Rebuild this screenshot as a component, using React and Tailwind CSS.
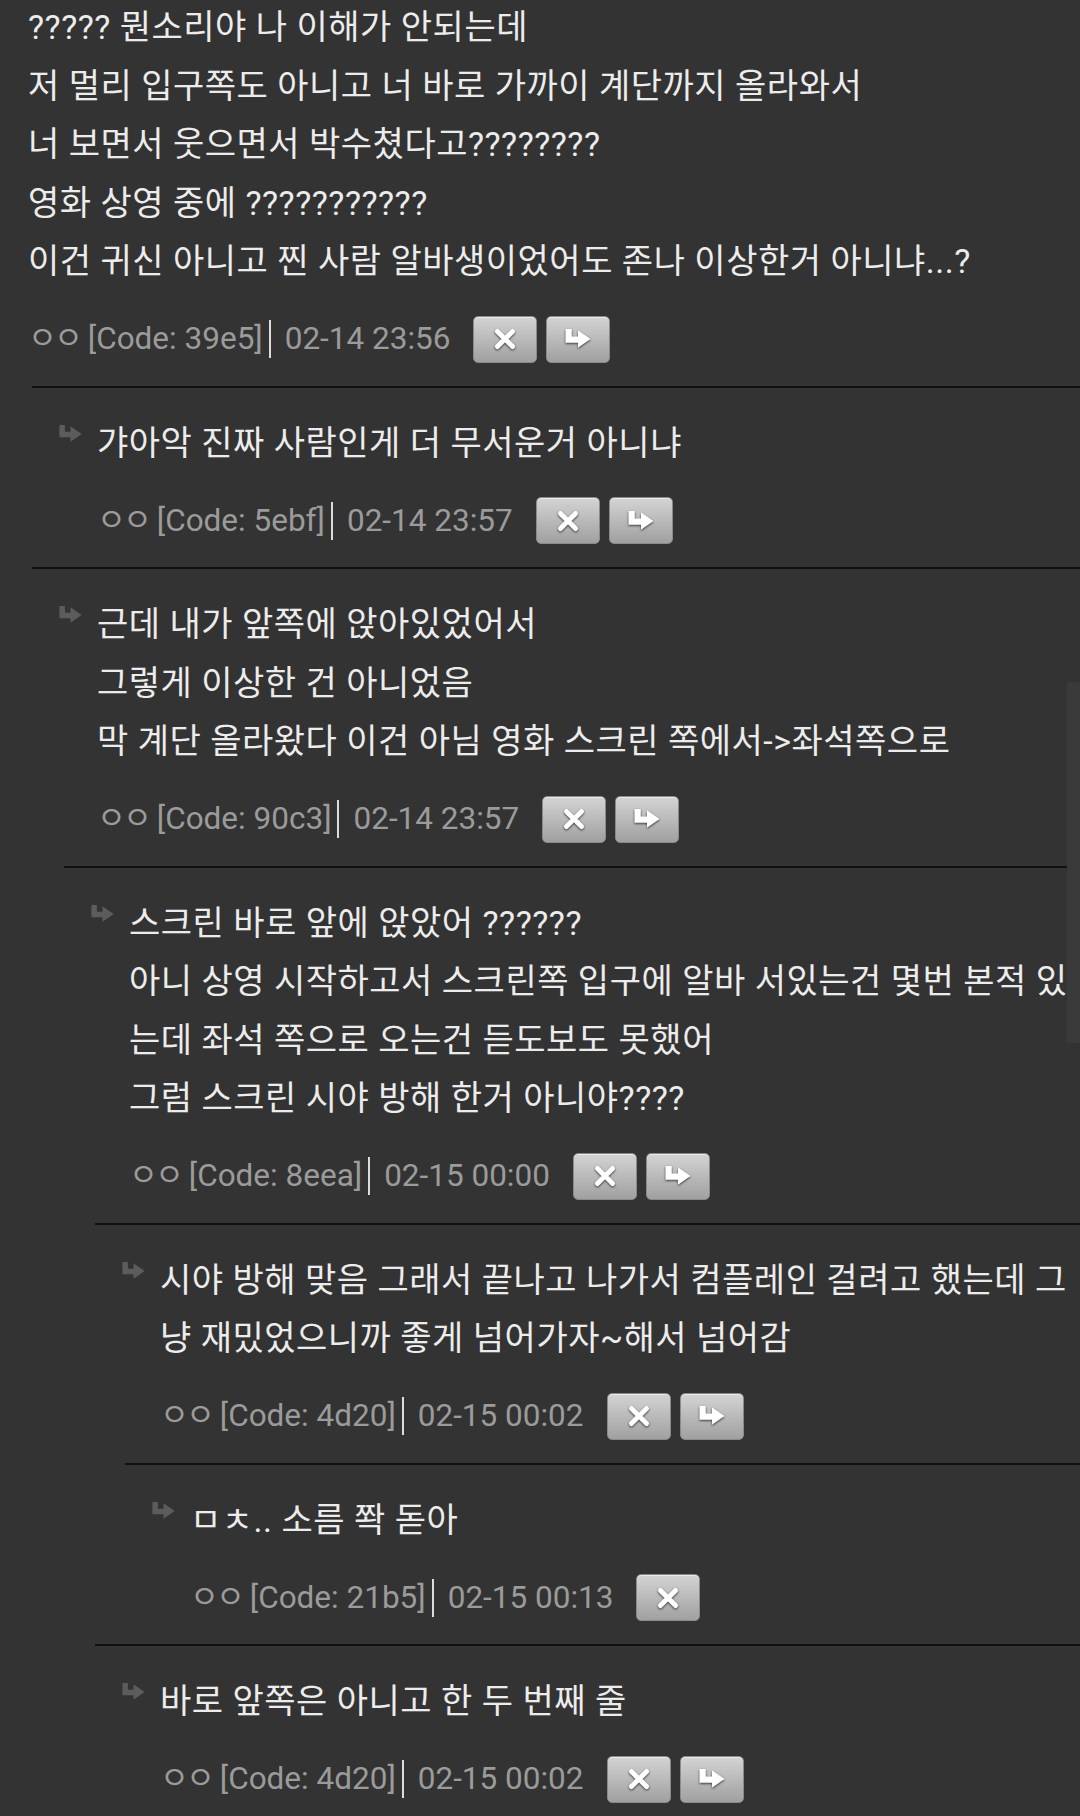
const comments = [
  {
    level: 0,
    lines: [
      "????? 뭔소리야 나 이해가 안되는데",
      "저 멀리 입구쪽도 아니고 너 바로 가까이 계단까지 올라와서",
      "너 보면서 웃으면서 박수쳤다고????????",
      "영화 상영 중에 ???????????",
      "이건 귀신 아니고 찐 사람 알바생이었어도 존나 이상한거 아니냐...?",
    ],
    code: "39e5",
    time: "02-14 23:56",
    reply: true,
  },
  {
    level: 1,
    lines: ["갸아악 진짜 사람인게 더 무서운거 아니냐"],
    code: "5ebf",
    time: "02-14 23:57",
    reply: true,
  },
  {
    level: 1,
    lines: [
      "근데 내가 앞쪽에 앉아있었어서",
      "그렇게 이상한 건 아니었음",
      "막 계단 올라왔다 이건 아님 영화 스크린 쪽에서->좌석쪽으로",
    ],
    code: "90c3",
    time: "02-14 23:57",
    reply: true,
  },
  {
    level: 2,
    lines: [
      "스크린 바로 앞에 앉았어 ??????",
      "아니 상영 시작하고서 스크린쪽 입구에 알바 서있는건 몇번 본적 있",
      "는데 좌석 쪽으로 오는건 듣도보도 못했어",
      "그럼 스크린 시야 방해 한거 아니야????",
    ],
    code: "8eea",
    time: "02-15 00:00",
    reply: true,
  },
  {
    level: 3,
    lines: [
      "시야 방해 맞음 그래서 끝나고 나가서 컴플레인 걸려고 했는데 그",
      "냥 재밌었으니까 좋게 넘어가자~해서 넘어감",
    ],
    code: "4d20",
    time: "02-15 00:02",
    reply: true,
  },
  {
    level: 4,
    lines: ["ㅁㅊ.. 소름 쫙 돋아"],
    code: "21b5",
    time: "02-15 00:13",
    reply: false,
  },
  {
    level: 3,
    lines: ["바로 앞쪽은 아니고 한 두 번째 줄"],
    code: "4d20",
    time: "02-15 00:02",
    reply: true,
  },
];

// left edge of the divider for each reply depth
const indent = {
  1: "ml-[32px]",
  2: "ml-[64px]",
  3: "ml-[95px]",
  4: "ml-[125px]",
};

function ReplyArrow({ className, color }) {
  return (
    <svg viewBox="0 0 24 18" className={className}>
      <path d="M2 1h5v6h5V2l10 7-10 7v-4H2z" fill={color} />
    </svg>
  );
}

function Button({ children }) {
  return (
    <button className="w-[64px] h-[47px] rounded-[5px] bg-gradient-to-b from-[#d4d4d4] to-[#a0a0a0] border border-[#8a8a8a] shadow-[inset_0_1px_0_rgba(255,255,255,0.5)] flex items-center justify-center">
      {children}
    </button>
  );
}

function Meta({ code, time, reply }) {
  return (
    <div className="flex items-center h-[47px] mt-[25px]">
      <span className="text-[31.5px] text-[#9b9b9b] whitespace-nowrap">
        <span className="tracking-[-3px]">ㅇㅇ</span> [Code: {code}]
      </span>
      <span className="ml-[6px] mr-[14px] w-[2px] h-[38px] bg-[#dcdcdc]"></span>
      <span className="text-[31.5px] text-[#9b9b9b] whitespace-nowrap">{time}</span>
      <div className="flex gap-[9px] ml-[23px]">
        <Button>
          <svg viewBox="0 0 24 24" className="w-[26px] h-[26px] drop-shadow-[0_1px_1px_rgba(0,0,0,0.7)]">
            <path d="M5 5l14 14M19 5L5 19" stroke="#ffffff" strokeWidth="4.5" strokeLinecap="round" />
          </svg>
        </Button>
        {reply && (
          <Button>
            <ReplyArrow className="w-[30px] h-[24px] drop-shadow-[0_1px_1px_rgba(0,0,0,0.7)]" color="#ffffff" />
          </Button>
        )}
      </div>
    </div>
  );
}

function Lines({ lines }) {
  return (
    <div className="text-[34px] tracking-[0.5px] leading-[58.5px] text-[#ececec] whitespace-nowrap">
      {lines.map((l, i) => (
        <div key={i}>{l}</div>
      ))}
    </div>
  );
}

function Comment({ c }) {
  if (c.level === 0) {
    return (
      <div className="-mt-[2px] pl-[28px] pb-[23px]">
        <Lines lines={c.lines} />
        <Meta code={c.code} time={c.time} reply={c.reply} />
      </div>
    );
  }

  return (
    <div className={`${indent[c.level]} border-t-2 border-[#111111] pt-[26px] pb-[23px] pl-[25px] flex items-start`}>
      <ReplyArrow className="w-[27px] h-[20px] mt-[10px] shrink-0" color="#5c5c5c" />
      <div className="ml-[13px]">
        <Lines lines={c.lines} />
        <Meta code={c.code} time={c.time} reply={c.reply} />
      </div>
    </div>
  );
}

export default function App() {
  return (
    <div
      className="relative min-h-screen bg-[#333333] overflow-hidden"
      style={{ fontFamily: 'Roboto, "Noto Sans CJK KR", sans-serif' }}
    >
      {comments.map((c, i) => (
        <Comment key={i} c={c} />
      ))}
      <div className="absolute right-0 top-[682px] w-[13px] h-[361px] bg-[#3a3a3a]"></div>
    </div>
  );
}
